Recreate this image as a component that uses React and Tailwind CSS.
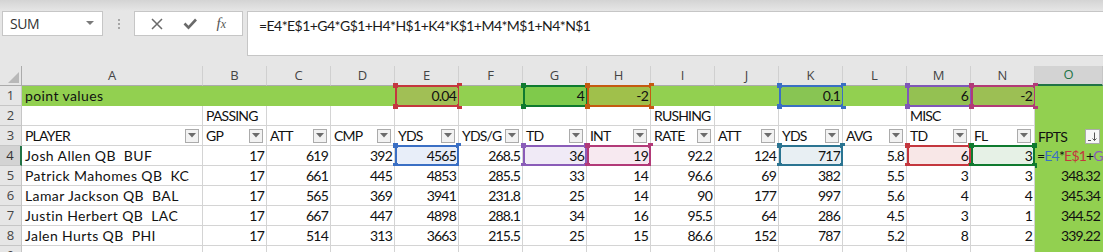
import React from 'react';

const COLW = [
  'w-[22px]', 'w-[181px]',
  'w-[64px]', 'w-[64px]', 'w-[64px]', 'w-[64px]', 'w-[64px]', 'w-[64px]', 'w-[64px]',
  'w-[64px]', 'w-[64px]', 'w-[64px]', 'w-[64px]', 'w-[64px]', 'w-[64px]',
  'w-[68px]',
];
const LETTERS = ['', 'A', 'B', 'C', 'D', 'E', 'F', 'G', 'H', 'I', 'J', 'K', 'L', 'M', 'N', 'O'];
const HEADERS = ['PLAYER', 'GP', 'ATT', 'CMP', 'YDS', 'YDS/G', 'TD', 'INT', 'RATE', 'ATT', 'YDS', 'AVG', 'TD', 'FL', 'FPTS'];
const DATA = [
  ['Josh Allen QB  BUF', '17', '619', '392', '4565', '268.5', '36', '19', '92.2', '124', '717', '5.8', '6', '3', null],
  ['Patrick Mahomes QB  KC', '17', '661', '445', '4853', '285.5', '33', '14', '96.6', '69', '382', '5.5', '3', '3', '348.32'],
  ['Lamar Jackson QB  BAL', '17', '565', '369', '3941', '231.8', '25', '14', '90', '177', '997', '5.6', '4', '4', '345.34'],
  ['Justin Herbert QB  LAC', '17', '667', '447', '4898', '288.1', '34', '16', '95.5', '64', '286', '4.5', '3', '1', '344.52'],
  ['Jalen Hurts QB  PHI', '17', '514', '313', '3663', '215.5', '25', '15', '86.6', '152', '787', '5.2', '8', '2', '339.22'],
];
const ROW1 = { 5: '0.04', 7: '4', 8: '-2', 11: '0.1', 13: '6', 14: '-2' };
const SEL1 = {
  5: { c: '#c4373e', bg: '#a1bf55' },
  7: { c: '#0f7a2f', bg: '#7fca4b' },
  8: { c: '#c55a11', bg: '#a0c04b' },
  11: { c: '#3a6fc4', bg: '#88c553' },
  13: { c: '#8057b8', bg: '#94c152' },
  14: { c: '#b23a78', bg: '#9cbf54' },
};
const SEL4 = {
  5: { c: '#3a6fc4', bg: '#e8eef9' },
  7: { c: '#8a5cb8', bg: '#f0eaf6' },
  8: { c: '#b23a78', bg: '#f7e9f0' },
  11: { c: '#2b7491', bg: '#e8eff3' },
  13: { c: '#c4373e', bg: '#f8e7e7' },
  14: { c: '#0f7a2f', bg: '#e6f1e6' },
};

const FONT = "font-['Lato','Liberation_Sans',sans-serif]";
const UI = "font-['Open_Sans','Noto_Sans',sans-serif]";
const NUM = 'tracking-[-0.8px]';
const CAPS = 'tracking-[-0.8px]';
const NAME = 'tracking-[0.4px]';
const ROWTXT = 'flex h-[20px] text-[14px] leading-[19px] text-[#111]';

function Sel({ color }) {
  const sq = 'absolute w-[5px] h-[5px]';
  return (
    <div className="absolute left-0 -right-px -top-px bottom-[-1px] border-2 pointer-events-none" style={{ borderColor: color }}>
      <div className={`${sq} -left-[4px] -top-[4px]`} style={{ background: color }} />
      <div className={`${sq} -right-[4px] -top-[4px]`} style={{ background: color }} />
      <div className={`${sq} -left-[4px] -bottom-[4px]`} style={{ background: color }} />
      <div className={`${sq} -right-[4px] -bottom-[4px]`} style={{ background: color }} />
    </div>
  );
}

function FilterBtn() {
  return (
    <div className="w-[14px] h-[14px] shrink-0 border border-[#ababab] bg-[#f2f2f2] flex items-center justify-center">
      <svg width="8" height="5" viewBox="0 0 8 5"><polygon points="0,0 8,0 4,4.5" fill="#6b6b6b" /></svg>
    </div>
  );
}

function SortBtn() {
  return (
    <div className="w-[15px] h-[15px] shrink-0 border border-[#ababab] bg-[#f7f7f7] flex items-center justify-center">
      <svg width="11" height="11" viewBox="0 0 11 11" fill="none" stroke="#555" strokeWidth="1">
        <path d="M1 9.5h3" />
        <path d="M7.5 1.5v8" />
        <path d="M5.5 7.5l2 2 2-2" />
      </svg>
    </div>
  );
}

function RowHead({ n, active }) {
  return (
    <div className={`${COLW[0]} shrink-0 h-full flex items-center justify-center text-[13px] tracking-normal ${UI} ${active ? 'bg-[#d3d3d3] text-[#333] border-r-2 border-r-[#217346] border-b border-b-[#c6c6c6]' : 'bg-[#e6e6e6] text-[#444] border-r border-b border-[#c6c6c6]'}`}>
      {n}
    </div>
  );
}

export default function App() {
  return (
    <div className={`w-[1103px] h-[252px] overflow-hidden bg-[#e6e6e6] ${FONT}`}>
      {/* Toolbar */}
      <div className="h-[66px] flex flex-col">
        <div className="h-[11px] bg-gradient-to-b from-[#d4d4d4] to-[#e6e6e6]" />
        <div className="flex items-start">
          <div className={`ml-[2px] w-[101px] h-[25px] border border-[#c6c6c6] bg-white flex items-center justify-between pl-[7px] pr-[8px] ${UI} text-[14px] tracking-[-0.4px] text-[#333]`}>
            <span>SUM</span>
            <svg width="8" height="5" viewBox="0 0 8 5"><polygon points="0,0 8,0 4,4" fill="#7a7a7a" /></svg>
          </div>
          <div className="w-[31px] h-[25px] flex flex-col items-center justify-center gap-[2px]">
            <div className="w-[2px] h-[2px] bg-[#a6a6a6]" />
            <div className="w-[2px] h-[2px] bg-[#a6a6a6]" />
            <div className="w-[2px] h-[2px] bg-[#a6a6a6]" />
          </div>
          <div className="w-[109px] h-[25px] border border-[#c6c6c6] bg-white flex items-center justify-around px-[6px]">
            <svg width="12" height="12" viewBox="0 0 12 12" stroke="#6a6a6a" strokeWidth="1.5" fill="none"><path d="M1 1l10 10M11 1L1 11" /></svg>
            <svg width="14" height="12" viewBox="0 0 14 12" stroke="#6a6a6a" strokeWidth="2.6" fill="none"><path d="M1.5 5.5l4 4.2L13 1.5" /></svg>
            <span className="font-['Liberation_Serif',serif] italic text-[15px] text-[#555] leading-none">f<span className="text-[12px]">x</span></span>
          </div>
          <div className="ml-[4px] flex-1 h-[45px] border border-r-0 border-[#c6c6c6] bg-white pl-[11px] pt-[4px] text-[14px] tracking-[-0.55px] text-[#1a1a1a] leading-[20px]">
            =E4*E$1+G4*G$1+H4*H$1+K4*K$1+M4*M$1+N4*N$1
          </div>
        </div>
      </div>

      {/* Column headers */}
      <div className="flex h-[20px]">
        <div className={`${COLW[0]} shrink-0 h-full border-r border-b border-[#ababab] flex items-end justify-end pr-[2px] pb-[2px]`}>
          <svg width="11" height="11" viewBox="0 0 11 11"><polygon points="11,0 11,11 0,11" fill="#b8b8b8" /></svg>
        </div>
        {LETTERS.slice(1).map((L, i) => {
          const c = i + 1;
          const active = L === 'O';
          return (
            <div key={L} className={`${COLW[c]} shrink-0 h-full flex items-center justify-center text-[13px] ${UI} ${active ? 'bg-[#d3d3d3] text-[#217346] border-b-2 border-b-[#217346] border-r border-r-[#c6c6c6]' : 'text-[#444] border-r border-r-[#d0d0d0] border-b border-b-[#ababab]'}`}>
              {L}
            </div>
          );
        })}
      </div>

      {/* Row 1 */}
      <div className={ROWTXT}>
        <RowHead n="1" />
        {COLW.slice(1).map((w, i) => {
          const c = i + 1;
          const sel = SEL1[c];
          return (
            <div key={c} className={`${w} shrink-0 h-full relative bg-[#92d050] whitespace-nowrap ${c === 1 ? `pl-[3px] text-left ${NAME}` : `pr-[3px] text-right ${NUM}`}`}
              style={sel ? { background: sel.bg } : undefined}>
              {c === 1 ? 'point values' : ROW1[c] || ''}
              {sel && <Sel color={sel.c} />}
            </div>
          );
        })}
      </div>

      {/* Row 2 */}
      <div className={ROWTXT}>
        <RowHead n="2" />
        {COLW.slice(1).map((w, i) => {
          const c = i + 1;
          const txt = c === 2 ? 'PASSING' : c === 9 ? 'RUSHING' : c === 13 ? 'MISC' : '';
          return (
            <div key={c} className={`${w} shrink-0 h-full pl-[3px] whitespace-nowrap ${CAPS} ${c === 15 ? 'bg-[#92d050]' : 'bg-white border-r border-b border-[#d4d4d4]'}`}>
              {txt}
            </div>
          );
        })}
      </div>

      {/* Row 3 */}
      <div className={ROWTXT}>
        <RowHead n="3" />
        {HEADERS.map((h, i) => {
          const c = i + 1;
          const last = c === 15;
          return (
            <div key={c} className={`${COLW[c]} shrink-0 h-full flex items-center justify-between pl-[3px] pr-[3px] whitespace-nowrap ${last ? 'bg-[#92d050]' : 'bg-white border-r border-b border-[#d4d4d4]'}`}>
              <span className={CAPS}>{h}</span>
              {last ? <SortBtn /> : <FilterBtn />}
            </div>
          );
        })}
      </div>

      {/* Data rows */}
      {DATA.map((row, r) => {
        const rn = r + 4;
        return (
          <div key={rn} className={ROWTXT}>
            <RowHead n={String(rn)} active={rn === 4} />
            {row.map((v, i) => {
              const c = i + 1;
              const sel = rn === 4 ? SEL4[c] : null;
              if (c === 15) {
                return (
                  <div key={c} className={`${COLW[c]} shrink-0 h-full bg-[#92d050] whitespace-nowrap overflow-hidden ${NUM} ${v === null ? 'pl-[2px] text-left' : 'pr-[3px] text-right'}`}>
                    {v === null ? (
                      <span>=<span className="text-[#3a6fc4]">E4</span>*<span className="text-[#c4373e]">E$1</span>+<span className="text-[#8a5cb8]">G</span></span>
                    ) : v}
                  </div>
                );
              }
              return (
                <div key={c} className={`${COLW[c]} shrink-0 h-full relative bg-white border-r border-b border-[#d4d4d4] ${c === 1 ? `pl-[3px] text-left whitespace-pre ${NAME}` : `pr-[2px] text-right whitespace-nowrap ${NUM}`}`}
                  style={sel ? { background: sel.bg } : undefined}>
                  {v}
                  {sel && <Sel color={sel.c} />}
                </div>
              );
            })}
          </div>
        );
      })}

      {/* Row 9 (partial) */}
      <div className={ROWTXT}>
        <RowHead n="9" />
        {COLW.slice(1).map((w, i) => {
          const c = i + 1;
          return (
            <div key={c} className={`${w} shrink-0 h-full ${c === 15 ? 'bg-[#92d050]' : 'bg-white border-r border-b border-[#d4d4d4]'}`} />
          );
        })}
      </div>
    </div>
  );
}
